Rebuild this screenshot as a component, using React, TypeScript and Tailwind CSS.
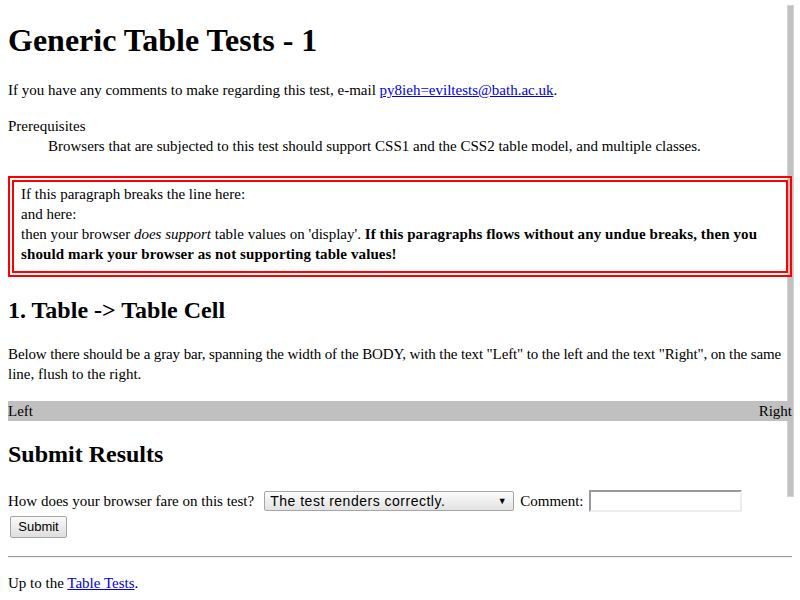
export default function App() {
  return (
    <div className="relative h-[600px] w-[800px] overflow-hidden bg-white font-['Liberation_Serif',serif] text-[15px] leading-[20px] text-black">
      <div className="absolute left-[787px] top-[5px] h-[492px] w-[7px] border border-[#d4d4d4] bg-[#c1c1c1]" />
      <div className="relative px-[8px] pt-[22px]">
        <h1 className="text-[32px] font-bold leading-[36px]">Generic Table Tests - 1</h1>
        <p className="mt-[22px]">
          If you have any comments to make regarding this test, e-mail{" "}
          <a href="#" className="text-[#0000ee] underline">py8ieh=eviltests@bath.ac.uk</a>.
        </p>
        <dl className="mt-[16px]">
          <dt>Prerequisites</dt>
          <dd className="pl-[40px]">
            Browsers that are subjected to this test should support CSS1 and the CSS2 table model, and multiple classes.
          </dd>
        </dl>
        <div className="mt-[20px] border-[6px] border-double border-[#ff0000] px-[7px] pb-[7px] pt-[2px]">
          <div>If this paragraph breaks the line here:</div>
          <div>and here:</div>
          <div className="whitespace-nowrap">
            then your browser <em>does support</em> table values on 'display'.{" "}
            <strong className="tracking-[0.1px]">If this paragraphs flows without any undue breaks, then you</strong>
          </div>
          <div className="whitespace-nowrap">
            <strong className="tracking-[0.1px]">should mark your browser as not supporting table values!</strong>
          </div>
        </div>
        <h2 className="mt-[19px] text-[24px] font-bold leading-[28px]">1. Table -&gt; Table Cell</h2>
        <p className="mt-[20px]">
          <span className="whitespace-nowrap tracking-[-0.12px]">
            Below there should be a gray bar, spanning the width of the BODY, with the text "Left" to the left and the text "Right", on the same
          </span>
          <br />
          line, flush to the right.
        </p>
        <div className="mt-[17px] flex h-[20px] items-center justify-between bg-[#c0c0c0]">
          <span>Left</span>
          <span>Right</span>
        </div>
        <h2 className="mt-[19px] text-[24px] font-bold leading-[28px]">Submit Results</h2>
        <div className="mt-[22px] flex h-[22px] items-center">
          <span>How does your browser fare on this test?</span>
          <div className="ml-[10px] flex h-[20px] w-[250px] items-center justify-between rounded-[2px] border border-[#a6a6a6] bg-gradient-to-b from-[#fcfcfc] to-[#e2e2e2] pl-[5px] pr-[6px] font-['Liberation_Sans',sans-serif] text-[14px] leading-[16px] tracking-[0.5px]">
            <span>The test renders correctly.</span>
            <span className="text-[9px]">▼</span>
          </div>
          <span className="ml-[6px]">Comment:</span>
          <div className="ml-[5px] h-[22px] w-[153px] border-2 border-b-[#eeeeee] border-l-[#999999] border-r-[#eeeeee] border-t-[#999999] bg-white" />
        </div>
        <div className="mt-[4px] pl-[2px]">
          <div className="flex h-[22px] w-[57px] items-center justify-center rounded-[2px] border border-[#a6a6a6] bg-gradient-to-b from-[#fafafa] to-[#dedede] font-['Liberation_Sans',sans-serif] text-[13px] leading-[16px]">
            Submit
          </div>
        </div>
        <div className="mt-[18px] h-[2px] border-b border-t border-b-[#eeeeee] border-t-[#9a9a9a]" />
        <p className="mt-[15px]">
          Up to the <a href="#" className="text-[#0000ee] underline">Table Tests</a>.
        </p>
      </div>
    </div>
  );
}
